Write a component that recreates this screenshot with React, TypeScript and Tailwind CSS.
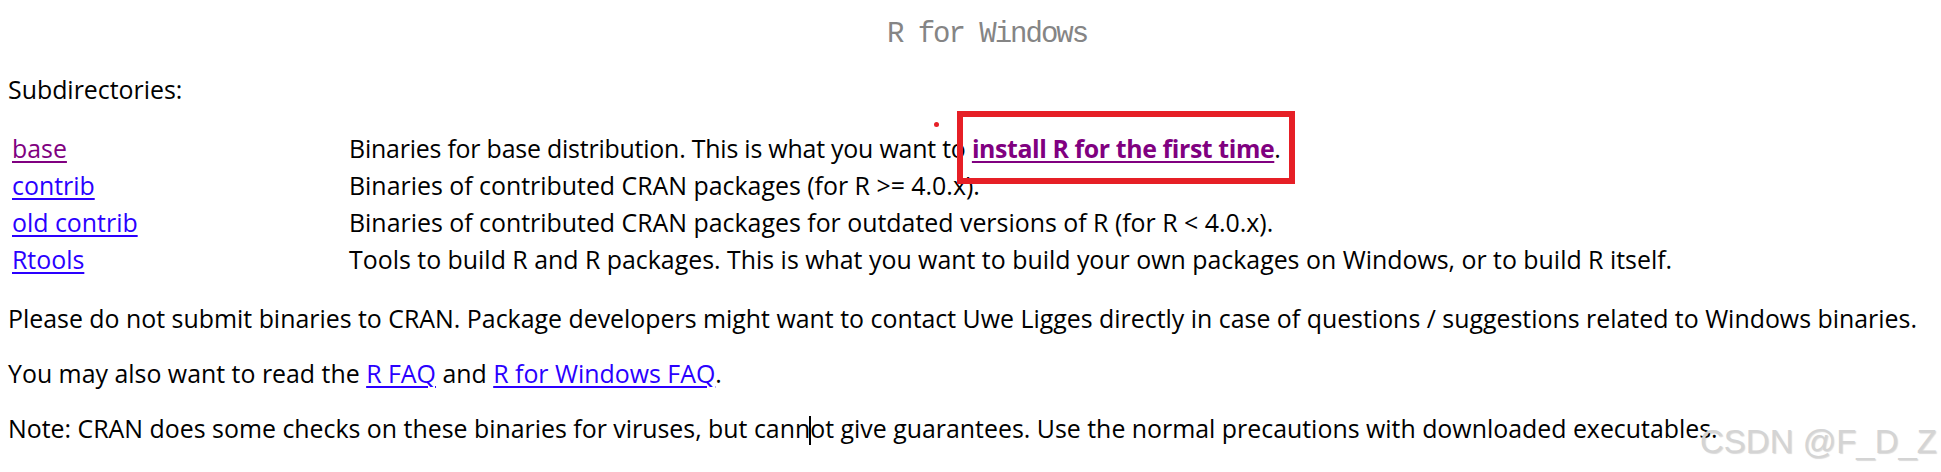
const body = 'font-["Open_Sans","Noto_Sans",sans-serif] text-[24.9px] text-black';

const subdirs = [
  { name: 'base', visited: true, desc: 'base' },
  { name: 'contrib', visited: false, desc: 'Binaries of contributed CRAN packages (for R >= 4.0.x).' },
  { name: 'old contrib', visited: false, desc: 'Binaries of contributed CRAN packages for outdated versions of R (for R < 4.0.x).' },
  { name: 'Rtools', visited: false, desc: 'Tools to build R and R packages. This is what you want to build your own packages on Windows, or to build R itself.' },
];

function Link({ children, visited }: { children: React.ReactNode; visited?: boolean }) {
  return (
    <a href="#" className={`underline underline-offset-[3px] decoration-[1.5px] ${visited ? 'text-[#800080]' : 'text-[#2a00ff]'}`}>
      {children}
    </a>
  );
}

// link wrapped in the red annotation box from the screenshot
function MarkedLink() {
  return (
    <span className="relative">
      <a href="#" className="font-bold tracking-[-0.4px] text-[#800080] underline underline-offset-[3px] decoration-[1.5px]">
        install R for the first time
      </a>
      .
      <span className="absolute -left-[15px] -right-[14px] -top-[20px] -bottom-[19px] border-[6px] border-[#e61f26]" />
      <span className="absolute -left-[38px] -top-[9px] h-[5px] w-[5px] rounded-full bg-[#e61f26]" />
    </span>
  );
}

export default function App() {
  return (
    <div className={`relative w-[1941px] h-[472px] overflow-hidden bg-white ${body}`}>
      <h1 className='pt-[17px] pl-[33px] text-center font-["Liberation_Mono",monospace] text-[29px] leading-[36px] tracking-[-2px] font-normal text-[#858585]'>
        R for Windows
      </h1>

      <p className="mt-[20px] pl-[8px] leading-[32px]">Subdirectories:</p>

      <div className="mt-[25px] grid grid-cols-[337px_1fr] pl-[12px] leading-[37px]">
        {subdirs.map((s) => (
          <div key={s.name} className="contents">
            <div>
              <Link visited={s.visited}>{s.name}</Link>
            </div>
            <div className="whitespace-nowrap">
              {s.desc === 'base' ? (
                <>
                  <span className="tracking-[-0.2px]">Binaries for base distribution. This is what you want to </span>
                  <MarkedLink />
                </>
              ) : (
                s.desc
              )}
            </div>
          </div>
        ))}
      </div>

      <div className="mt-[24px] flex flex-col gap-[23px] pl-[8px] leading-[32px] whitespace-nowrap">
        <p>
          Please do not submit binaries to CRAN. Package developers might want to contact Uwe Ligges directly in case of
          questions / suggestions related to Windows binaries.
        </p>
        <p>
          You may also want to read the <Link>R FAQ</Link> and <Link>R for Windows FAQ</Link>.
        </p>
        <p>
          Note: CRAN does some checks on these binaries for viruses, but cann
          <span className="inline-block h-[29px] w-[2px] -mx-[1px] align-[-7px] bg-black" />
          ot give guarantees. Use the normal precautions with downloaded executables.
        </p>
      </div>

      {/* watermark */}
      <div className='absolute left-[1700px] top-[422px] font-["Liberation_Sans",Arial,sans-serif] text-[33px] leading-[40px] text-[#d4d4d4] [text-shadow:1px_1px_1px_rgba(0,0,0,0.15)] whitespace-nowrap'>
        CSDN @F_D_Z
      </div>
    </div>
  );
}
